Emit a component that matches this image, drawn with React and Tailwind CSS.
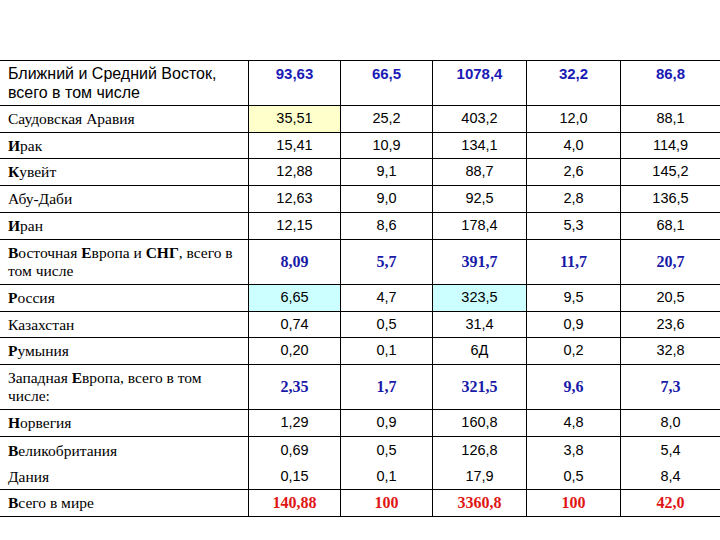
import React from 'react';

const serif = { fontFamily: '"Liberation Serif", "Times New Roman", serif' };
const sans = { fontFamily: '"Liberation Sans", Arial, sans-serif' };

// h: высота строки с нижней линией; kind: тип строки
const rows = [
  { label: <>Ближний и Средний Восток,<br />всего в том числе</>, kind: 'head', h: 'h-[45px]', vals: ['93,63', '66,5', '1078,4', '32,2', '86,8'] },
  { label: <>Саудовская Аравия</>, h: 'h-[27px]', vals: ['35,51', '25,2', '403,2', '12,0', '88,1'], fill: { 0: 'bg-[#ffffcc]' } },
  { label: <><b>И</b>рак</>, h: 'h-[26px]', vals: ['15,41', '10,9', '134,1', '4,0', '114,9'] },
  { label: <><b>К</b>увейт</>, h: 'h-[27px]', vals: ['12,88', '9,1', '88,7', '2,6', '145,2'] },
  { label: <>Абу-Даби</>, h: 'h-[27px]', vals: ['12,63', '9,0', '92,5', '2,8', '136,5'] },
  { label: <><b>И</b>ран</>, h: 'h-[27px]', vals: ['12,15', '8,6', '178,4', '5,3', '68,1'] },
  { label: <><b>В</b>осточная <b>Е</b>вропа и <b>СНГ</b>, всего в<br />том числе</>, kind: 'blue', h: 'h-[45px]', vals: ['8,09', '5,7', '391,7', '11,7', '20,7'] },
  { label: <><b>Р</b>оссия</>, h: 'h-[27px]', vals: ['6,65', '4,7', '323,5', '9,5', '20,5'], fill: { 0: 'bg-[#ccffff]', 2: 'bg-[#ccffff]' } },
  { label: <>Казахстан</>, h: 'h-[26px]', vals: ['0,74', '0,5', '31,4', '0,9', '23,6'] },
  { label: <><b>Р</b>умыния</>, h: 'h-[27px]', vals: ['0,20', '0,1', '6Д', '0,2', '32,8'] },
  { label: <>Западная <b>Е</b>вропа, всего в том<br />числе:</>, kind: 'blue', h: 'h-[45px]', vals: ['2,35', '1,7', '321,5', '9,6', '7,3'] },
  { label: <><b>Н</b>орвегия</>, h: 'h-[27px]', vals: ['1,29', '0,9', '160,8', '4,8', '8,0'] },
  { label: <><b>В</b>еликобритания</>, h: 'h-[27px]', noLine: true, vals: ['0,69', '0,5', '126,8', '3,8', '5,4'] },
  { label: <>Дания</>, h: 'h-[26px]', vals: ['0,15', '0,1', '17,9', '0,5', '8,4'] },
  { label: <><b>В</b>сего в мире</>, kind: 'red', h: 'h-[27px]', vals: ['140,88', '100', '3360,8', '100', '42,0'] },
];

const Row = ({ row }) => {
  const head = row.kind === 'head';
  let numCls = 'text-[14.5px] text-black';
  let numFont = sans;
  if (head) numCls = 'text-[15px] font-bold text-[#1a1ab4] self-start pt-[3px] leading-[19px]';
  if (row.kind === 'blue') { numCls = 'text-[16px] font-bold text-[#1a1aa8]'; numFont = serif; }
  if (row.kind === 'red') { numCls = 'text-[16px] font-bold text-[#e01515]'; numFont = serif; }

  return (
    <div className={`grid grid-cols-[248px_92px_92px_94px_94px_100px] ${row.h} ${row.noLine ? '' : 'border-b border-black'}`}>
      <div
        className={head ? 'flex items-center pl-2 pr-3 text-[16px] leading-[19px] text-black' : 'flex items-center pl-2 pr-3 text-[15.5px] leading-[18px] text-black'}
        style={head ? sans : serif}
      >
        <div>{row.label}</div>
      </div>
      {row.vals.map((v, i) => (
        <div
          key={i}
          className={`flex justify-center border-l border-black ${head ? '' : 'items-center'} ${row.fill && row.fill[i] ? row.fill[i] : ''}`}
        >
          <span className={numCls} style={numFont}>{v}</span>
        </div>
      ))}
    </div>
  );
};

export default function App() {
  return (
    <div className="w-[720px] h-[540px] bg-white pt-[60px] overflow-hidden">
      <div className="border-t border-black">
        {rows.map((row, i) => (
          <Row key={i} row={row} />
        ))}
      </div>
    </div>
  );
}
